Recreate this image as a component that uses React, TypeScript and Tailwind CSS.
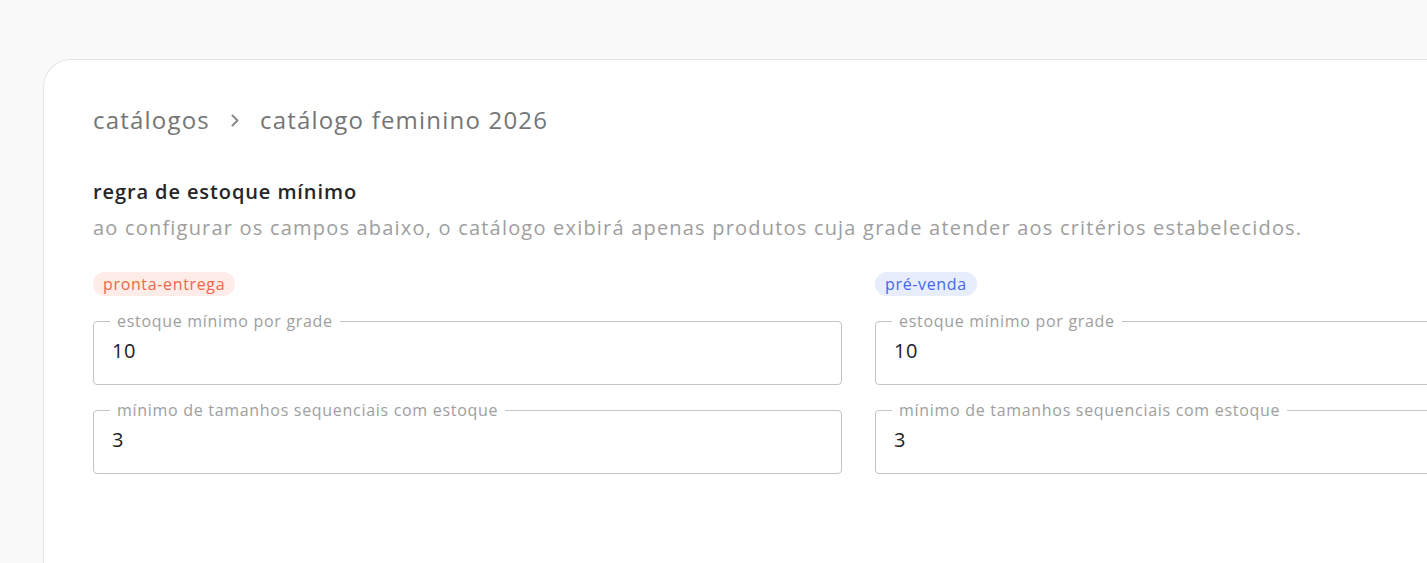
import React from "react";

const font = { fontFamily: '"Open Sans", "Noto Sans", sans-serif' };

function Field({ label, value }: { label: string; value: string }) {
  return (
    <fieldset className="border border-[#c4c4c4] rounded-[4px] h-[74px] pl-[16px] pr-[16px] m-0 min-w-0">
      <legend className="px-[7px] text-[16px] leading-[20px] tracking-[0.7px] text-[#9e9e9e]">{label}</legend>
      <div className="pl-[2px] pt-[6px] text-[20px] leading-[28px] tracking-[0.5px] text-[#212121]">{value}</div>
    </fieldset>
  );
}

function Column({
  badge,
  badgeClass,
}: {
  badge: string;
  badgeClass: string;
}) {
  return (
    <div className="flex flex-col">
      <div className="flex">
        <span className={`rounded-full h-[24px] px-[10px] text-[16px] leading-[24px] tracking-[0.65px] ${badgeClass}`}>{badge}</span>
      </div>
      <div className="mt-[15px] flex flex-col gap-[15px]">
        <Field label="estoque mínimo por grade" value="10" />
        <Field label="mínimo de tamanhos sequenciais com estoque" value="3" />
      </div>
    </div>
  );
}

export default function App() {
  return (
    <div className="w-[1427px] h-[563px] overflow-hidden bg-[#f9f9f9] pt-[59px] pl-[43px]" style={font}>
      <div className="w-[1500px] h-[600px] bg-white border-l border-t border-[#e4e4e4] rounded-tl-[28px] pl-[49px] pt-[44px]">
        <nav className="flex items-center gap-[21px] text-[24px] leading-[32px] tracking-[1.2px] text-[#757575]">
          <span>catálogos</span>
          <svg width="8" height="13" viewBox="0 0 8 13" fill="none" stroke="#8a8a8a" strokeWidth="2" strokeLinecap="round" strokeLinejoin="round">
            <path d="M1.5 1.5l5 5-5 5" />
          </svg>
          <span>catálogo feminino 2026</span>
        </nav>
        <h2 className="mt-[42px] text-[20px] leading-[28px] font-semibold tracking-[0.9px] text-[#262626]">regra de estoque mínimo</h2>
        <p className="mt-[8px] text-[20px] leading-[28px] tracking-[1.2px] text-[#9e9e9e]">
          ao configurar os campos abaixo, o catálogo exibirá apenas produtos cuja grade atender aos critérios estabelecidos.
        </p>
        <div className="mt-[30px] grid grid-cols-[749px_749px] gap-x-[33px]">
          <Column badge="pronta-entrega" badgeClass="bg-[#fdece7] text-[#f2674a]" />
          <Column badge="pré-venda" badgeClass="bg-[#e8edfd] text-[#4467ee]" />
        </div>
      </div>
    </div>
  );
}
